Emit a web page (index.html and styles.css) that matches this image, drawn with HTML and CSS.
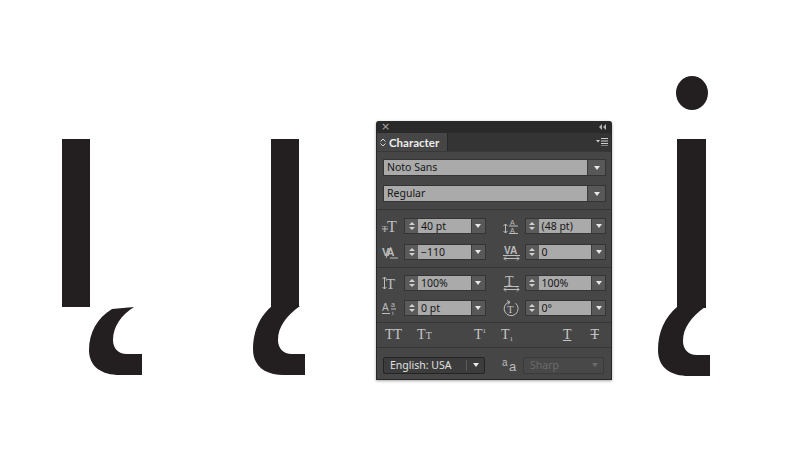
FILE: index.html
```
<!DOCTYPE html>
<html>
<head>
<meta charset="utf-8">
<title>Character</title>
<link rel="stylesheet" href="styles.css">
</head>
<body>
<div class="artboard">

    <svg class="art" width="800" height="455" viewBox="0 0 800 455">
        <defs>
            <path id="hook" d="M300,306 L272,306 C260,316 253,331 253,349 C253,367 266,375 284,375 L305,375 L305,354 L292,354 C283,354 278,348 278,340 C278,327 286,316 300,306 Z"/>
        </defs>
        <g fill="#231f20">
            <rect x="62" y="139" width="28" height="168"/>
            <path d="M134,307 L112,309 C97,318 89,333 89,350 C89,367 102,375 120,375 L142,375 L142,354 L127,354 C118,354 113,348 113,340 C113,327 121,315 134,307 Z"/>

            <rect x="271" y="139" width="28" height="168"/>
            <use href="#hook"/>

            <ellipse cx="692" cy="93" rx="16" ry="17"/>
            <rect x="677" y="139" width="29" height="169"/>
            <use href="#hook" transform="translate(405,1)"/>
        </g>
    </svg>

    <div class="panel">
        <div class="titlebar">
            <span class="close">&times;</span>
            <svg class="collapse" width="7" height="6" viewBox="0 0 7 6"><path d="M3,0 L0,3 L3,6 Z M7,0 L4,3 L7,6 Z" fill="#b5b5b5"/></svg>
        </div>

        <div class="tabs">
            <div class="tab">
                <svg width="6" height="9" viewBox="0 0 6 9"><path d="M0.5,3.5 L3,1 L5.5,3.5 M0.5,5.5 L3,8 L5.5,5.5" fill="none" stroke="#d8d8d8" stroke-width="1"/></svg>
                <span>Character</span>
            </div>
            <svg class="menu" width="12" height="8" viewBox="0 0 12 8"><path d="M0,2 L4,2 L2,4.5 Z" fill="#cfcfcf"/><path d="M5,0.5 H12 M5,3 H12 M5,5.5 H12 M5,8 H12" stroke="#cfcfcf" stroke-width="1"/></svg>
        </div>

        <div class="section fonts">
            <div class="select">
                <div class="value">Noto Sans</div>
                <div class="arrow"><i></i></div>
            </div>
            <div class="select">
                <div class="value">Regular</div>
                <div class="arrow"><i></i></div>
            </div>
        </div>

        <div class="section rows">
            <div class="row">
                <div class="ctl">
                    <svg class="ico" width="17" height="16" viewBox="0 0 17 16">
                        <text x="0" y="14" font-size="9">T</text>
                        <text x="5" y="14" font-size="16">T</text>
                        <path d="M0,11 H6" stroke="#bdbdbd"/>
                    </svg>
                    <div class="spin"><i class="up"></i><i class="dn"></i></div>
                    <div class="field">40 pt</div>
                    <div class="arrow"><i></i></div>
                </div>
                <div class="ctl">
                    <svg class="ico" width="17" height="16" viewBox="0 0 17 16">
                        <text x="7" y="7" font-size="7" font-family="Liberation Sans">A</text>
                        <text x="7" y="15" font-size="7" font-family="Liberation Sans">A</text>
                        <path d="M6,8 H15 M6,15.5 H15" stroke="#bdbdbd"/>
                        <path d="M2.5,6 V15 M0.5,8 L2.5,6 L4.5,8 M0.5,13 L2.5,15 L4.5,13" stroke="#bdbdbd" fill="none"/>
                    </svg>
                    <div class="spin"><i class="up"></i><i class="dn"></i></div>
                    <div class="field">(48 pt)</div>
                    <div class="arrow"><i></i></div>
                </div>
            </div>
            <div class="row">
                <div class="ctl">
                    <svg class="ico" width="17" height="16" viewBox="0 0 17 16">
                        <text x="0" y="12" font-size="11" font-family="Liberation Sans" font-weight="bold" letter-spacing="-2">VA</text>
                        <path d="M4,14 L9,3" stroke="#bdbdbd"/>
                        <path d="M8,14 H16" stroke="#bdbdbd"/>
                    </svg>
                    <div class="spin"><i class="up"></i><i class="dn"></i></div>
                    <div class="field">&minus;110</div>
                    <div class="arrow"><i></i></div>
                </div>
                <div class="ctl">
                    <svg class="ico" width="17" height="16" viewBox="0 0 17 16">
                        <text x="1" y="10" font-size="10" font-family="Liberation Sans" font-weight="bold">VA</text>
                        <path d="M0,11.5 H17" stroke="#bdbdbd"/>
                        <path d="M1,14.5 H16 M3,12.5 L1,14.5 L3,16.5 M14,12.5 L16,14.5 L14,16.5" stroke="#bdbdbd" fill="none"/>
                    </svg>
                    <div class="spin"><i class="up"></i><i class="dn"></i></div>
                    <div class="field">0</div>
                    <div class="arrow"><i></i></div>
                </div>
            </div>
        </div>

        <div class="section rows tight">
            <div class="row">
                <div class="ctl">
                    <svg class="ico" width="17" height="16" viewBox="0 0 17 16">
                        <path d="M2.5,2 V14 M0.5,4 L2.5,2 L4.5,4 M0.5,12 L2.5,14 L4.5,12" stroke="#bdbdbd" fill="none"/>
                        <text x="4" y="14" font-size="15">T</text>
                    </svg>
                    <div class="spin"><i class="up"></i><i class="dn"></i></div>
                    <div class="field">100%</div>
                    <div class="arrow"><i></i></div>
                </div>
                <div class="ctl">
                    <svg class="ico" width="17" height="16" viewBox="0 0 17 16">
                        <text x="2" y="11" font-size="14">T</text>
                        <path d="M1,11.5 H16" stroke="#bdbdbd"/>
                        <path d="M1,14.5 H16 M3,12.5 L1,14.5 L3,16.5 M14,12.5 L16,14.5 L14,16.5" stroke="#bdbdbd" fill="none"/>
                    </svg>
                    <div class="spin"><i class="up"></i><i class="dn"></i></div>
                    <div class="field">100%</div>
                    <div class="arrow"><i></i></div>
                </div>
            </div>
            <div class="row">
                <div class="ctl">
                    <svg class="ico" width="17" height="16" viewBox="0 0 17 16">
                        <text x="0" y="11" font-size="10" font-family="Liberation Sans">A</text>
                        <path d="M0,13.5 H8" stroke="#bdbdbd"/>
                        <text x="9" y="7" font-size="7" font-family="Liberation Sans">a</text>
                        <path d="M9,9 H14" stroke="#bdbdbd"/>
                        <text x="10" y="15" font-size="6" font-family="Liberation Sans">t</text>
                    </svg>
                    <div class="spin"><i class="up"></i><i class="dn"></i></div>
                    <div class="field">0 pt</div>
                    <div class="arrow"><i></i></div>
                </div>
                <div class="ctl">
                    <svg class="ico" width="17" height="17" viewBox="0 0 17 17">
                        <path d="M12.5,3.2 A7,7 0 1 1 6,2" stroke="#bdbdbd" fill="none"/>
                        <path d="M4,0.5 L7,2 L5,4.5" stroke="#bdbdbd" fill="none"/>
                        <text x="4" y="13" font-size="11">T</text>
                    </svg>
                    <div class="spin"><i class="up"></i><i class="dn"></i></div>
                    <div class="field">0&deg;</div>
                    <div class="arrow"><i></i></div>
                </div>
            </div>
        </div>

        <div class="section toolbar">
            <div class="group">
                <span class="tbtn">TT</span>
                <span class="tbtn">T<small>T</small></span>
            </div>
            <div class="group">
                <span class="tbtn">T<sup>1</sup></span>
                <span class="tbtn">T<sub>1</sub></span>
            </div>
            <div class="group right">
                <span class="tbtn under">T</span>
                <span class="tbtn strike">T</span>
            </div>
        </div>

        <div class="section lang">
            <div class="dark-select">
                <span class="label">English: USA</span>
                <span class="darrow"><i></i></span>
            </div>
            <svg class="ico aa" width="18" height="18" viewBox="0 0 18 18">
                <text x="1" y="10" font-size="10" font-family="Liberation Sans">a</text>
                <text x="8" y="15" font-size="13" font-family="Liberation Sans">a</text>
            </svg>
            <div class="dark-select disabled">
                <span class="label">Sharp</span>
                <span class="darrow"><i></i></span>
            </div>
        </div>
    </div>

</div>
</body>
</html>
```

FILE: styles.css
```
html, body {
    margin: 0;
    padding: 0;
    background: #fff;
}

.artboard {
    position: relative;
    width: 800px;
    height: 455px;
    overflow: hidden;
    font-family: "Noto Sans", "DejaVu Sans", sans-serif;
}

.art {
    position: absolute;
    left: 0;
    top: 0;
}

/* floating panel sits over the artboard */
.panel {
    position: absolute;
    left: 376px;
    top: 121px;
    width: 236px;
    height: 259px;
    box-sizing: border-box;
    background-color: rgb(70, 70, 70);
    border: 1px solid rgb(40, 40, 40);
    border-top: 0;
    border-radius: 3px 3px 0 0;
    overflow: hidden;
    box-shadow: 0 1px 3px rgba(0, 0, 0, 0.35);
}

.titlebar {
    height: 12px;
    background-color: rgb(42, 42, 42);
    display: flex;
    align-items: center;
    justify-content: space-between;
    padding: 0 5px 0 4px;
}

.close {
    color: #a8a8a8;
    font-size: 11px;
    line-height: 12px;
    font-family: "DejaVu Sans", sans-serif;
}

.tabs {
    height: 18px;
    background-color: rgb(52, 52, 52);
    border-bottom: 1px solid rgb(56, 56, 56);
    display: flex;
    align-items: stretch;
    justify-content: space-between;
}

.tab {
    width: 67px;
    background-color: rgb(70, 70, 70);
    border-right: 1px solid rgb(40, 40, 40);
    display: flex;
    align-items: center;
    gap: 3px;
    padding-left: 3px;
    color: #ececec;
    font-family: "Lato", sans-serif;
    font-weight: bold;
    font-size: 11.5px;
}

.menu {
    align-self: center;
    margin-right: 3px;
}

.section {
    padding: 0 5px;
    border-bottom: 1px solid rgb(54, 54, 54);
}

.fonts {
    padding-top: 7px;
    padding-bottom: 7px;
    display: flex;
    flex-direction: column;
    gap: 9px;
}

.select {
    display: flex;
    height: 17px;
    margin-left: 1px;
    border: 1px solid rgb(52, 52, 52);
    box-sizing: border-box;
}

.value, .field {
    flex: 1;
    background-color: rgb(170, 170, 170);
    color: #161616;
    font-size: 10.5px;
    line-height: 15px;
    padding-left: 3px;
    white-space: nowrap;
}

.arrow {
    width: 17px;
    background-color: rgb(88, 88, 88);
    border-left: 1px solid rgb(60, 60, 60);
    display: flex;
    align-items: center;
    justify-content: center;
}

.arrow i, .darrow i {
    display: block;
    width: 0;
    height: 0;
    border-left: 3.5px solid transparent;
    border-right: 3.5px solid transparent;
    border-top: 4px solid #e8e8e8;
}

.rows {
    padding-top: 8px;
    padding-bottom: 7px;
    display: flex;
    flex-direction: column;
    gap: 10px;
}

.rows.tight {
    padding-top: 7px;
    padding-bottom: 6px;
    gap: 9px;
}

.row {
    display: flex;
    gap: 17px;
}

.ctl {
    width: 104px;
    height: 16px;
    display: flex;
    align-items: center;
}

.ico {
    flex: none;
    margin-right: 5px;
    fill: #bdbdbd;
    font-family: "Liberation Serif", serif;
    overflow: visible;
}

.ctl .spin, .ctl .field, .ctl .arrow {
    height: 16px;
    box-sizing: border-box;
    border-top: 1px solid rgb(52, 52, 52);
    border-bottom: 1px solid rgb(52, 52, 52);
}

.spin {
    width: 14px;
    background-color: rgb(90, 90, 90);
    border-left: 1px solid rgb(52, 52, 52);
    display: flex;
    flex-direction: column;
    align-items: center;
    justify-content: space-evenly;
}

.spin i {
    display: block;
    width: 0;
    height: 0;
    border-left: 3px solid transparent;
    border-right: 3px solid transparent;
}

.spin .up {
    border-bottom: 3px solid #d0d0d0;
}

.spin .dn {
    border-top: 3px solid #d0d0d0;
}

.ctl .field {
    line-height: 14px;
}

.ctl .arrow {
    width: 15px;
    border-right: 1px solid rgb(52, 52, 52);
}

.toolbar {
    height: 24px;
    display: flex;
    align-items: center;
    padding: 0 12px 0 8px;
}

.group {
    display: flex;
    align-items: baseline;
    gap: 15px;
    width: 89px;
}

.group.right {
    margin-left: auto;
    width: auto;
    gap: 19px;
}

.tbtn {
    font-family: "Liberation Serif", serif;
    font-size: 14px;
    line-height: 16px;
    color: #c4c4c4;
}

.tbtn small {
    font-size: 10px;
}

.tbtn sup {
    font-size: 7px;
    vertical-align: 6px;
    line-height: 0;
}

.tbtn sub {
    font-size: 7px;
    vertical-align: -2px;
    line-height: 0;
}

.tbtn.under {
    text-decoration: underline;
}

.tbtn.strike {
    text-decoration: line-through;
}

.lang {
    border-bottom: 0;
    padding-top: 8px;
    display: flex;
    align-items: center;
}

.dark-select {
    height: 17px;
    box-sizing: border-box;
    display: flex;
    align-items: stretch;
    background-color: rgb(60, 60, 60);
    border: 1px solid rgb(36, 36, 36);
    border-radius: 2px;
    margin-left: 1px;
    width: 102px;
    color: #e0e0e0;
    font-size: 10.5px;
}

.dark-select .label {
    flex: 1;
    padding-left: 6px;
    line-height: 15px;
}

.darrow {
    width: 17px;
    border-left: 1px solid rgb(90, 90, 90);
    margin: 2px 0;
    display: flex;
    align-items: center;
    justify-content: center;
}

.lang .aa {
    margin: 0 4px 0 16px;
}

.dark-select.disabled {
    width: 81px;
    margin-left: 0;
    background-color: rgb(72, 72, 72);
    border-color: rgb(58, 58, 58);
    color: #6c6c6c;
}

.dark-select.disabled .darrow {
    border-left: 0;
}

.dark-select.disabled .darrow i {
    border-top-color: #6c6c6c;
}
```
